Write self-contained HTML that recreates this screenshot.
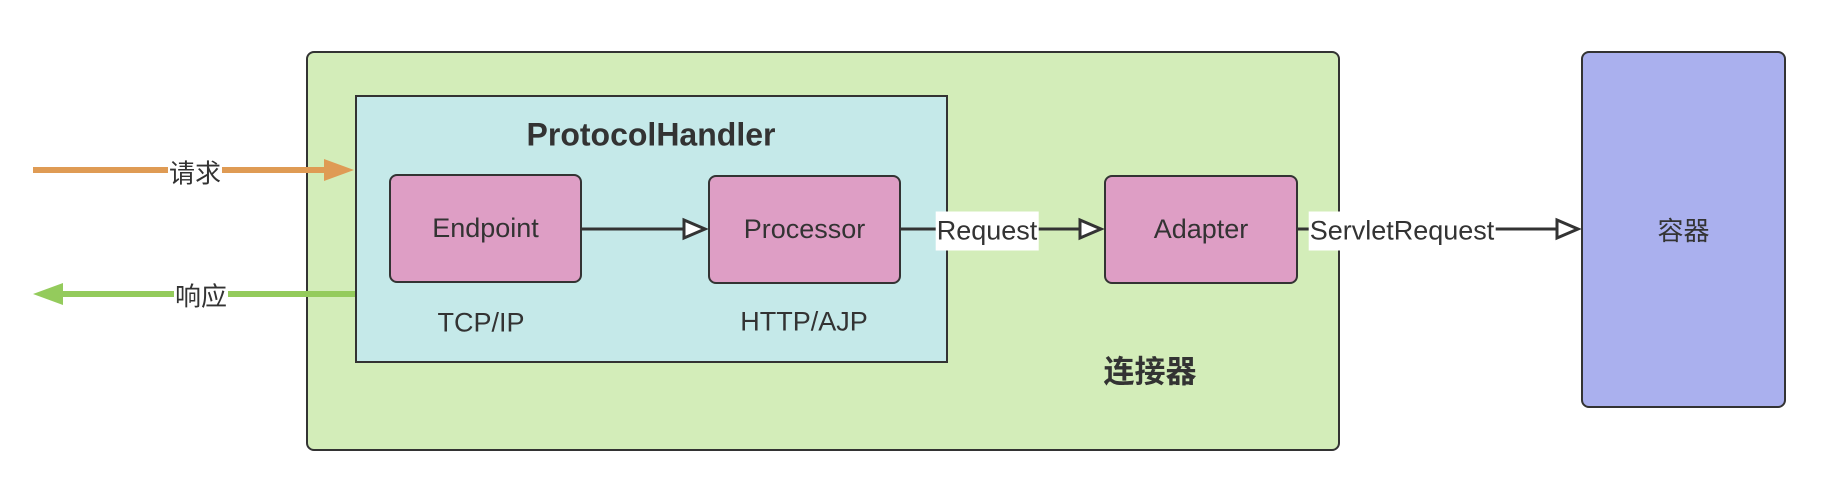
<!DOCTYPE html>
<html><head><meta charset="utf-8"><style>
body{margin:0;width:1823px;height:501px;background:#fff;position:relative;overflow:hidden;font-family:"Liberation Sans","Noto Sans CJK SC",sans-serif;color:#333}
.b{position:absolute;box-sizing:border-box;border:2.5px solid #333;display:flex;align-items:center;justify-content:center;font-size:27px}
.t{position:absolute;font-size:27px;transform:translate(-50%,-50%);white-space:nowrap}
.c{font-size:26px}
</style></head><body>
<div class="b" style="left:306px;top:51px;width:1034px;height:400px;background:#d3edb9;border-radius:8px"></div>
<div class="b" style="left:355px;top:95px;width:593px;height:268px;background:#c5e9e9;border-radius:0"></div>
<div class="t" style="left:651px;top:135px;font-weight:bold;font-size:32px">ProtocolHandler</div>
<div class="b" style="left:389px;top:174px;width:193px;height:109px;background:#de9ec5;border-radius:8px">Endpoint</div>
<div class="b" style="left:708px;top:175px;width:193px;height:109px;background:#de9ec5;border-radius:8px">Processor</div>
<div class="b" style="left:1104px;top:175px;width:194px;height:109px;background:#de9ec5;border-radius:8px">Adapter</div>
<div class="b c" style="left:1581px;top:51px;width:205px;height:357px;background:#aab0ee;border-radius:8px">容器</div>
<svg width="1823" height="501" style="position:absolute;left:0;top:0">
<g stroke="#333" stroke-width="3" fill="#fff">
<line x1="582" y1="229" x2="684" y2="229"/><path d="M684 220 L705 229 L684 238 Z"/>
<line x1="901" y1="229" x2="1080" y2="229"/><path d="M1080 220 L1101 229 L1080 238 Z"/>
<line x1="1298" y1="229" x2="1557" y2="229"/><path d="M1557 220 L1578 229 L1557 238 Z"/>
</g>
<line x1="33" y1="170" x2="328" y2="170" stroke="#df9b54" stroke-width="6"/>
<path d="M324 159 L354 170 L324 181 Z" fill="#df9b54"/>
<line x1="62" y1="294" x2="355" y2="294" stroke="#94cb5c" stroke-width="6"/>
<path d="M63 283 L33 294 L63 305 Z" fill="#94cb5c"/>
</svg>
<div class="t" style="left:987px;top:231px;background:#fff;padding:4px 1px">Request</div>
<div class="t" style="left:1402px;top:231px;background:#fff;padding:4px 1px">ServletRequest</div>
<div class="t c" style="left:195px;top:172px;background:#fff;padding:0 1px">请求</div>
<div class="t c" style="left:201px;top:295px;background:#fff;padding:0 1px">响应</div>
<div class="t" style="left:481px;top:323px">TCP/IP</div>
<div class="t" style="left:804px;top:322px">HTTP/AJP</div>
<div class="t" style="left:1150px;top:369px;font-weight:bold;font-size:31px">连接器</div>
</body></html>
